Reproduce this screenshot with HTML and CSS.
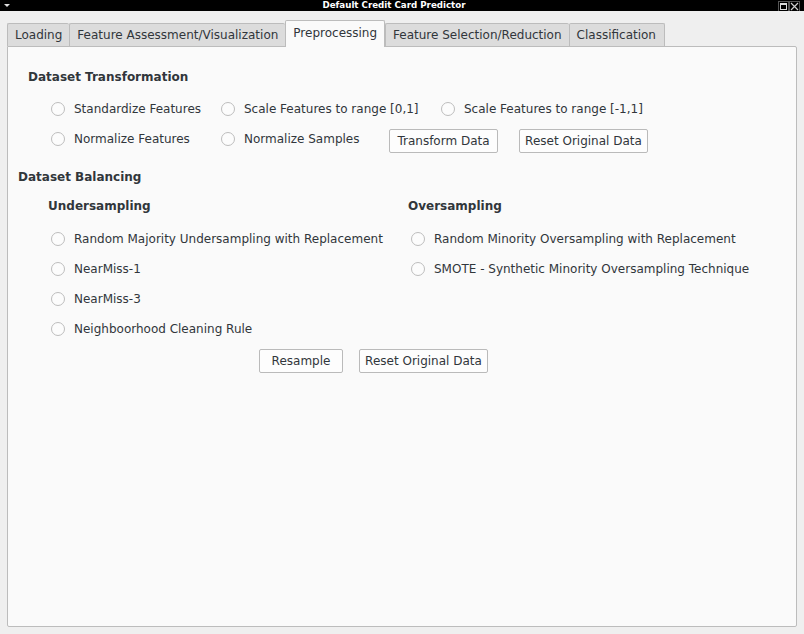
FILE: index.html
```html
<!DOCTYPE html>
<html lang="en">
<head>
    <meta charset="UTF-8">
    <meta name="viewport" content="width=device-width, initial-scale=1.0">
    <title>Default Credit Card Predictor</title>
    <link rel="stylesheet" href="styles.css">
</head>
<body>
    <div class="titlebar">
        <span class="menu-arrow"></span>
        <span class="title">Default Credit Card Predictor</span>
        <div class="win-buttons">
            <span class="win-btn"><span class="max-box"></span></span>
            <span class="win-btn">
                <svg width="9" height="9" viewBox="0 0 9 9"><path d="M1 1 L8 8 M8 1 L1 8" stroke="#cfcfcf" stroke-width="1.2" fill="none"/></svg>
            </span>
        </div>
    </div>

    <div class="window">
        <div class="tabs">
            <div class="tab">Loading</div>
            <div class="tab">Feature Assessment/Visualization</div>
            <div class="tab active">Preprocessing</div>
            <div class="tab">Feature Selection/Reduction</div>
            <div class="tab">Classification</div>
        </div>

        <div class="panel">
            <div class="transform">
                <h3>Dataset Transformation</h3>
                <div class="row">
                    <label class="radio col-a"><span class="circle"></span>Standardize Features</label>
                    <label class="radio col-b"><span class="circle"></span>Scale Features to range [0,1]</label>
                    <label class="radio"><span class="circle"></span>Scale Features to range [-1,1]</label>
                </div>
                <div class="row">
                    <label class="radio col-a"><span class="circle"></span>Normalize Features</label>
                    <label class="radio col-c"><span class="circle"></span>Normalize Samples</label>
                    <div class="btn-group">
                        <button class="btn btn-transform">Transform Data</button>
                        <button class="btn btn-reset">Reset Original Data</button>
                    </div>
                </div>
            </div>

            <h3>Dataset Balancing</h3>
            <div class="balancing">
                <div class="sampling under">
                    <h3>Undersampling</h3>
                    <label class="radio"><span class="circle"></span>Random Majority Undersampling with Replacement</label>
                    <label class="radio"><span class="circle"></span>NearMiss-1</label>
                    <label class="radio"><span class="circle"></span>NearMiss-3</label>
                    <label class="radio"><span class="circle"></span>Neighboorhood Cleaning Rule</label>
                </div>
                <div class="sampling">
                    <h3>Oversampling</h3>
                    <label class="radio"><span class="circle"></span>Random Minority Oversampling with Replacement</label>
                    <label class="radio"><span class="circle"></span>SMOTE - Synthetic Minority Oversampling Technique</label>
                </div>
            </div>
            <div class="btn-group resample-buttons">
                <button class="btn btn-resample">Resample</button>
                <button class="btn btn-reset">Reset Original Data</button>
            </div>
        </div>
    </div>
</body>
</html>
```

FILE: styles.css
```css
body {
    margin: 0;
    padding: 0;
    background-color: #efefef;
    font-family: "DejaVu Sans", sans-serif;
    font-size: 12px;
    color: #31363b;
}
.titlebar {
    height: 11px;
    background-color: #000;
    display: flex;
    align-items: center;
}
.menu-arrow {
    width: 0;
    height: 0;
    margin-left: 4px;
    border-left: 3px solid transparent;
    border-right: 3px solid transparent;
    border-top: 3px solid #e0e0e0;
}
.title {
    flex: 1;
    text-align: center;
    color: #fff;
    font-weight: bold;
    font-size: 8.7px;
    line-height: 11px;
}
.win-buttons {
    display: flex;
    margin-right: 4px;
}
.win-btn {
    width: 11px;
    height: 10px;
    border: 1px solid #555;
    border-bottom: none;
    display: flex;
    align-items: center;
    justify-content: center;
    box-sizing: border-box;
}
.max-box {
    width: 5px;
    height: 4px;
    border: 1px solid #ddd;
    border-top-width: 2px;
}
.window {
    padding: 9px 7px 0 7px;
}
.tabs {
    display: flex;
    align-items: flex-end;
    height: 26px;
    position: relative;
    z-index: 1;
}
.tab {
    height: 22px;
    line-height: 22px;
    padding: 0 7px;
    background-color: #dcdcdc;
    border: 1px solid #bcbcbc;
    border-bottom: none;
    border-right: none;
    border-radius: 2px 2px 0 0;
}
.tab:last-child {
    border-right: 1px solid #bcbcbc;
    padding-right: 8px;
}
.tab.active {
    height: 26px;
    line-height: 25px;
    background-color: #fafafa;
    border-right: 1px solid #bcbcbc;
    margin-bottom: -1px;
}
.panel {
    height: 581px;
    background-color: #fafafa;
    border: 1px solid #bcbcbc;
    border-radius: 0 2px 2px 2px;
    padding: 22px 10px 0 10px;
    box-sizing: border-box;
}
h3 {
    margin: 0;
    font-size: 12px;
    line-height: 16px;
    font-weight: bold;
    color: #31363b;
}
.transform {
    margin-left: 10px;
    margin-bottom: 15px;
}
.transform h3 {
    margin-bottom: 9px;
}
.row {
    display: flex;
    height: 30px;
    padding-left: 23px;
}
.col-a {
    width: 170px;
}
.col-b {
    width: 220px;
}
.col-c {
    width: 168px;
}
.radio {
    display: flex;
    align-items: center;
    height: 30px;
}
.circle {
    width: 14px;
    height: 14px;
    border: 1px solid #bdbdbd;
    border-radius: 50%;
    background-color: #fcfcfc;
    box-sizing: border-box;
    margin-right: 9px;
    flex-shrink: 0;
}
.btn-group {
    display: flex;
    gap: 21px;
    margin-top: 5px;
}
.btn {
    height: 24px;
    padding: 0;
    font-family: "DejaVu Sans", sans-serif;
    font-size: 12px;
    color: #31363b;
    background-color: #fdfdfd;
    border: 1px solid #bababa;
    border-radius: 2px;
}
.btn-transform {
    width: 109px;
}
.btn-reset {
    width: 129px;
}
.btn-resample {
    width: 84px;
}
.balancing {
    display: flex;
    margin-top: 13px;
    padding-left: 30px;
}
.sampling {
    display: flex;
    flex-direction: column;
}
.sampling.under {
    width: 360px;
}
.sampling h3 {
    margin-bottom: 10px;
}
.sampling .radio {
    padding-left: 3px;
}
.resample-buttons {
    gap: 16px;
    margin-left: 241px;
}
```
